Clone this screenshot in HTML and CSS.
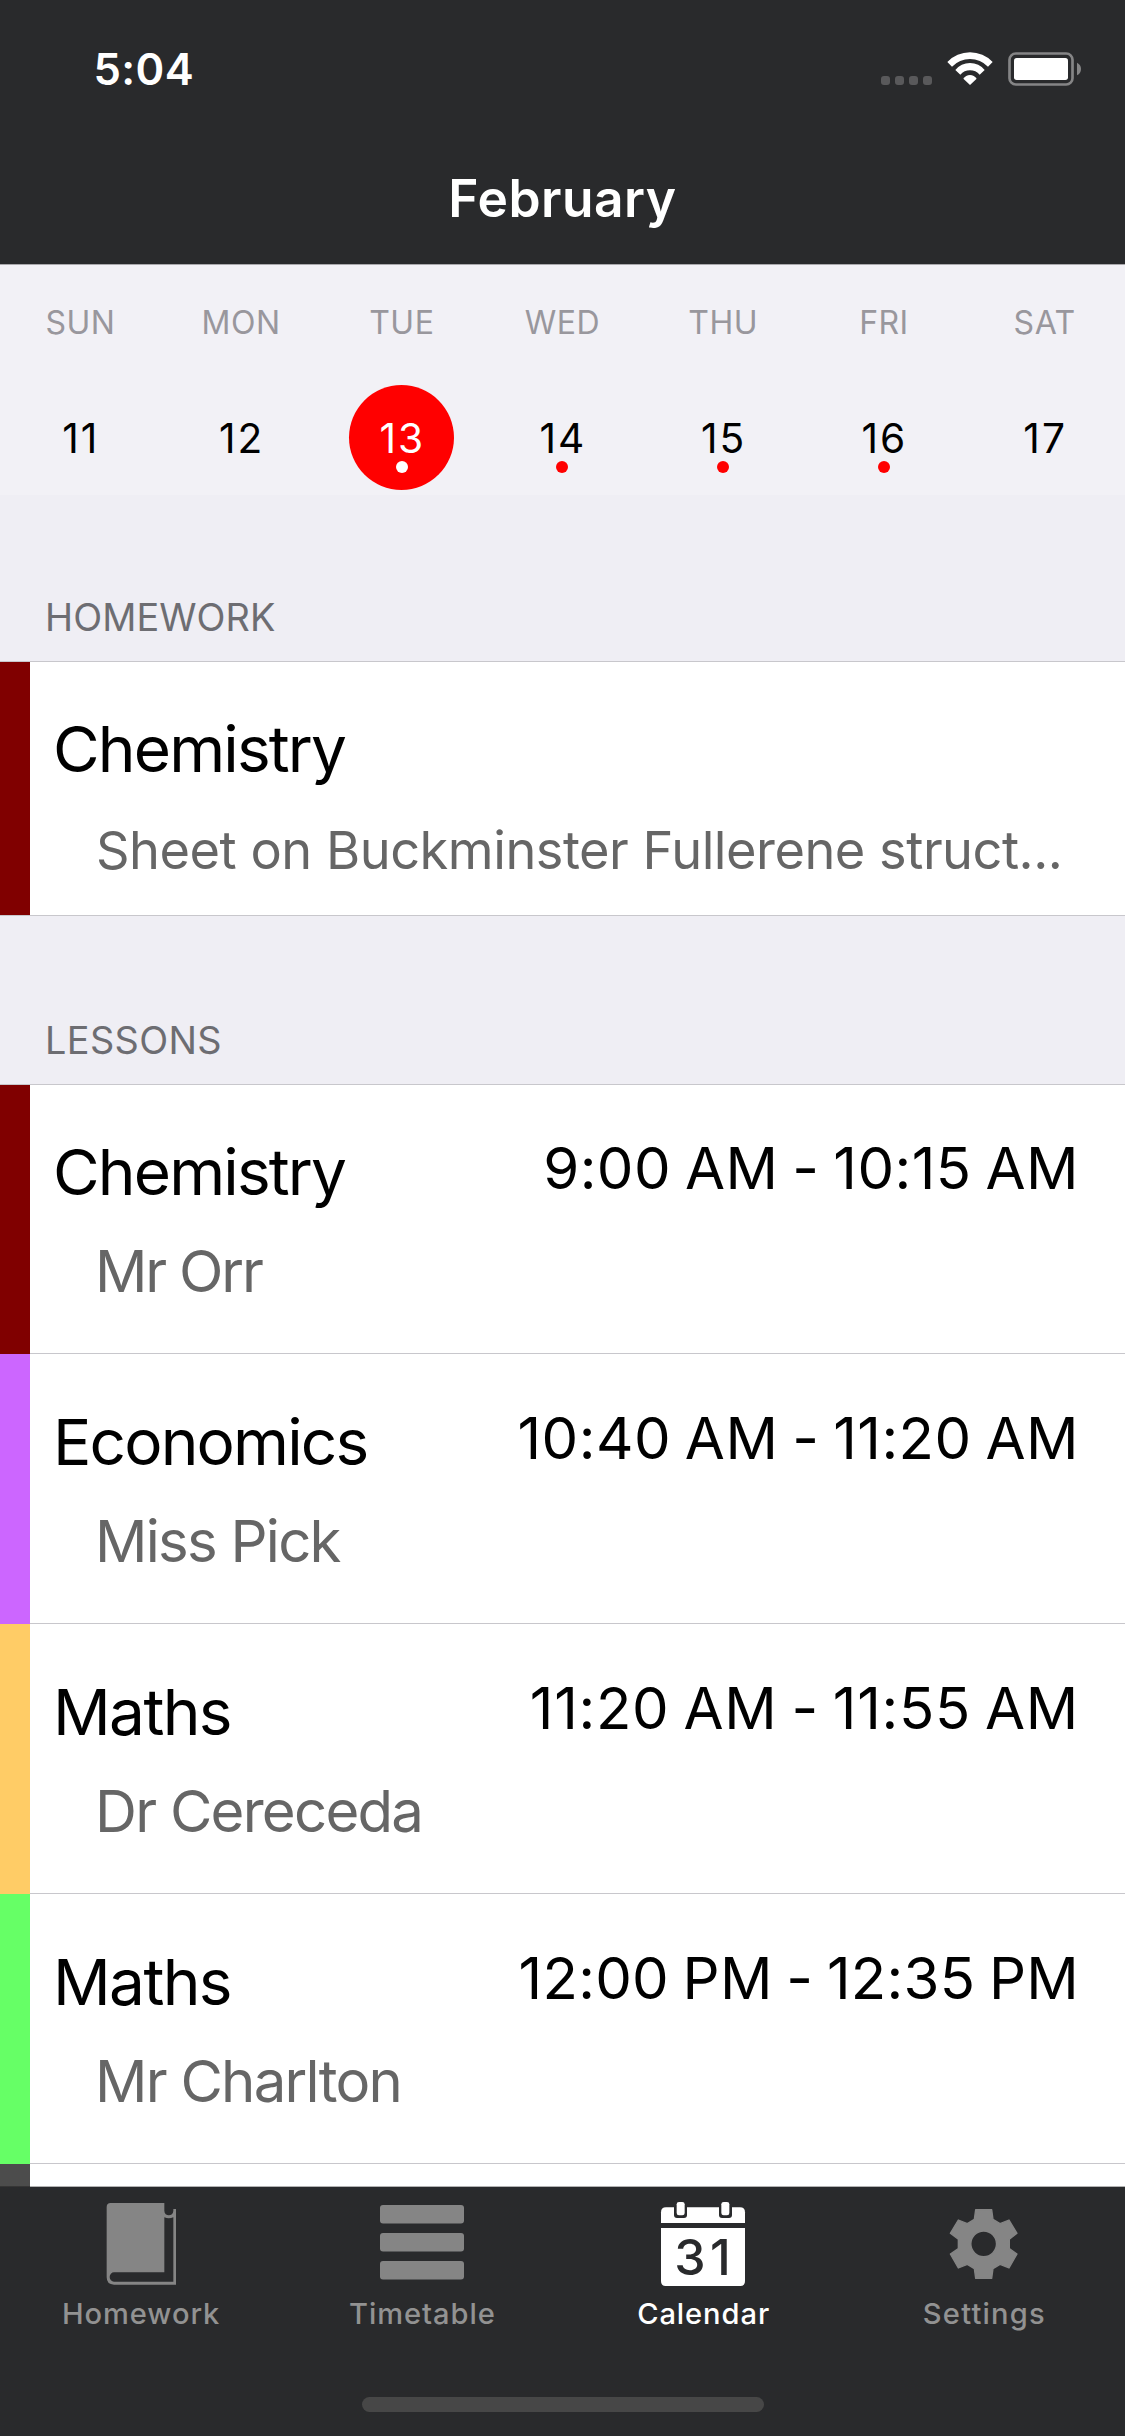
FILE: index.html
```html
<!DOCTYPE html>
<html lang="en">
<head>
<meta charset="utf-8">
<title>February</title>
<link rel="stylesheet" href="styles.css">
</head>
<body>
<div class="screen">
  <header class="header">
    <div class="status">
      <span class="clock">5:04</span>
      <svg class="status-icons" viewBox="60 66 603 102">
        <g fill="#59595b"><rect x="63" y="138" width="27" height="27" rx="9"/><rect x="105" y="138" width="27" height="27" rx="9"/><rect x="147" y="138" width="27" height="27" rx="9"/><rect x="189" y="138" width="27" height="27" rx="9"/></g>
        <g fill="#fff"><path d="M262 96A94 94 0 0 1 398 96L384 110A75 75 0 0 0 276 110Z"/><path d="M286 120A56 56 0 0 1 374 120L359 134A38 38 0 0 0 301 134Z"/><path d="M310 146A24 24 0 0 1 350 146L330 165Z"/><rect x="462" y="84" width="162" height="66" rx="8"/></g>
        <rect x="448.500" y="70.500" width="189" height="93" rx="19" fill="none" stroke="#858586" stroke-width="8"/>
        <path d="M651 98Q663 104 663 117T651 136Z" fill="#858586"/>
      </svg>
    </div>
    <h1 class="title">February</h1>
  </header>

  <main class="content">
    <section class="week">
      <div class="day"><span class="name">SUN</span><span class="num">11</span></div>
      <div class="day"><span class="name">MON</span><span class="num">12</span></div>
      <div class="day selected"><span class="name">TUE</span><span class="num">13<i class="dot"></i></span></div>
      <div class="day"><span class="name">WED</span><span class="num">14<i class="dot"></i></span></div>
      <div class="day"><span class="name">THU</span><span class="num">15<i class="dot"></i></span></div>
      <div class="day"><span class="name">FRI</span><span class="num">16<i class="dot"></i></span></div>
      <div class="day"><span class="name">SAT</span><span class="num">17</span></div>
    </section>

    <h2 class="section">HOMEWORK</h2>
    <article class="task">
      <div class="bar maroon"></div>
      <div class="info">
        <div class="subject">Chemistry</div>
        <div class="note">Sheet on Buckminster Fullerene struct...</div>
      </div>
    </article>

    <h2 class="section lessons">LESSONS</h2>
    <article class="lesson first">
      <div class="bar maroon"></div>
      <div class="body"><div class="info"><div class="subject">Chemistry</div><div class="teacher tight">Mr Orr</div></div><time class="time">9:00 AM - 10:15 AM</time></div>
    </article>
    <article class="lesson">
      <div class="bar purple"></div>
      <div class="body"><div class="info"><div class="subject">Economics</div><div class="teacher">Miss Pick</div></div><time class="time">10:40 AM - 11:20 AM</time></div>
    </article>
    <article class="lesson">
      <div class="bar orange"></div>
      <div class="body"><div class="info"><div class="subject maths">Maths</div><div class="teacher">Dr Cereceda</div></div><time class="time wide">11:20 AM - 11:55 AM</time></div>
    </article>
    <article class="lesson">
      <div class="bar green"></div>
      <div class="body"><div class="info"><div class="subject maths">Maths</div><div class="teacher">Mr Charlton</div></div><time class="time narrow">12:00 PM - 12:35 PM</time></div>
    </article>
    <article class="lesson">
      <div class="bar grey"></div>
      <div class="body"></div>
    </article>
  </main>

  <footer class="footer">
    <nav class="tabs">
      <a class="tab">
        <svg class="icon" viewBox="-13 36 300 252"><path fill="currentColor" fill-rule="evenodd" d="M46 39H207V62C207 80 234 80 234 62V57H242V284H56Q34 284 34 262V51Q34 39 46 39ZM207 82Q220 88 234 82V275H56A13 14 0 0 1 56 247H207Z"/></svg>
        <span class="label">Homework</span>
      </a>
      <a class="tab">
        <svg class="icon" viewBox="0 0 100 84" fill="currentColor"><rect x="8" y="3" width="84" height="18.500" rx="3"/><rect x="8" y="31" width="84" height="18.500" rx="3"/><rect x="8" y="59" width="84" height="18.500" rx="3"/></svg>
        <span class="label">Timetable</span>
      </a>
      <a class="tab active">
        <svg class="icon" viewBox="9 36 300 252"><g fill="currentColor"><path d="M33 99V67Q33 52 48 52H270Q285 52 285 67V99Z"/><path d="M33 114H285V273Q285 288 271 288H47Q33 288 33 273Z"/></g><g fill="#292a2c"><rect x="72" y="30" width="39" height="54" rx="9"/><rect x="207" y="30" width="39" height="54" rx="9"/></g><g fill="currentColor"><rect x="80" y="36" width="24" height="40" rx="7"/><rect x="214" y="36" width="24" height="40" rx="7"/></g><text class="date" y="256"><tspan x="73">3</tspan><tspan x="180">1</tspan></text></svg>
        <span class="label">Calendar</span>
      </a>
      <a class="tab">
        <svg class="icon" viewBox="-2 36 300 252"><path fill="currentColor" stroke="currentColor" stroke-width="4" stroke-linejoin="round" fill-rule="evenodd" d="M123 59H171L175 88L196 101L223 90L247 130L224 148V176L247 192L223 234L196 223L175 236L171 265H123L119 236L98 223L71 234L47 192L71 176V148L47 130L71 90L98 101L119 88ZM147 123A38.500 38.500 0 1 0 147 200A38.500 38.500 0 1 0 147 123Z"/></svg>
        <span class="label settings">Settings</span>
      </a>
    </nav>
    <div class="home-indicator"></div>
  </footer>
</div>
</body>
</html>
```
FILE: styles.css
```css
* { box-sizing: border-box; }
body { margin: 0; font-family: "Inter", "Liberation Sans", sans-serif; color: #000; }
.screen { width: 1125px; height: 2436px; display: flex; flex-direction: column; overflow: hidden; background: #efeef4; }

.header, .footer { flex: none; background: #292a2c; background-clip: padding-box; z-index: 1; color: #fff; }
.header { height: 265px; margin-bottom: -1px; border-bottom: 1px solid rgba(0, 0, 0, .3); }
.status { height: 138px; display: flex; align-items: center; justify-content: space-between; padding: 0 44px 0 93.500px; }
.clock { font-size: 43.600px; font-weight: 600; letter-spacing: .4px; }
.status-icons { width: 201px; height: 34px; }
.title { margin: 0; font-size: 51.500px; line-height: 120px; font-weight: 600; letter-spacing: .5px; text-align: center; }

.content { flex: none; height: 1923px; overflow: hidden; }
.week { height: 231px; padding-top: 1px; display: grid; grid-template-columns: repeat(7, 1fr); background: #f2f1f6; }
.day { display: flex; flex-direction: column; align-items: center; }
.name { height: 114px; font-size: 32px; line-height: 116px; letter-spacing: .5px; color: #99979d; }
.num { position: relative; width: 105px; height: 105px; margin-top: 6px; border-radius: 50%; font-size: 40.700px; line-height: 107px; letter-spacing: 2px; text-indent: 1px; text-align: center; }
.dot { position: absolute; left: 46.500px; top: 76px; width: 12px; height: 12px; border-radius: 50%; background: #f00; }
.selected .num { background: #f00; color: #fff; }
.selected .dot { background: #fff; }

.section { margin: 0; height: 167px; padding: 102px 0 0 45px; border-bottom: 1px solid #c8c7cc; font-size: 37.800px; line-height: 40px; font-weight: 400; letter-spacing: .1px; color: #6d6d72; }
.section.lessons { height: 169px; padding-top: 104px; letter-spacing: .4px; }

.task, .lesson { display: flex; background: #fff; }
.task { height: 254px; border-bottom: 1px solid #c8c7cc; }
.lesson { height: 270px; }
.lesson.first { height: 269px; }
.bar { flex: none; width: 30px; }
.maroon { background: #800000; }
.purple { background: #cc66ff; }
.orange { background: #ffcc66; }
.green { background: #66ff66; }
.grey { background: #4c4c4c; }
.body { flex: 1; display: flex; justify-content: space-between; padding-right: 46px; border-bottom: 1px solid #c8c7cc; }
.info { padding: 48px 0 0 23px; white-space: nowrap; }
.task .info, .first .info { padding-top: 47px; }
.subject { font-size: 63.900px; line-height: 80px; letter-spacing: -1.850px; }
.subject.maths { letter-spacing: -1.600px; }
.note { margin: 31px 0 0 43px; font-size: 52.300px; line-height: 60px; letter-spacing: -.470px; color: #666; }
.teacher { margin: 29px 0 0 42px; font-size: 58.100px; line-height: 60px; letter-spacing: -1.750px; color: #666; }
.teacher.tight { letter-spacing: -2.200px; }
.time { margin-top: 44px; font-size: 58.100px; line-height: 80px; letter-spacing: .480px; word-spacing: -3px; white-space: nowrap; }
.first .time { margin-top: 43px; }
.time.wide { letter-spacing: .700px; }
.time.narrow { letter-spacing: .270px; }

.footer { height: 250px; margin-top: -1px; border-top: 1px solid rgba(0, 0, 0, .3); }
.tabs { display: grid; grid-template-columns: repeat(4, 1fr); padding-top: 15px; }
.tab { display: flex; flex-direction: column; align-items: center; gap: 8px; color: #858585; }
.icon { width: 100px; height: 84px; }
.label { font-size: 29.100px; line-height: 40px; font-weight: 500; letter-spacing: .930px; text-indent: 1px; color: #929292; }
.label.settings { letter-spacing: 1.200px; text-indent: 0; }
.active, .active .label { color: #fff; }
.date { font-family: "Inter", sans-serif; font-size: 150px; font-weight: 500; fill: #292a2c; }
.home-indicator { width: 402px; height: 15px; margin: 63px auto 0; border-radius: 8px; background: #474747; }
```
